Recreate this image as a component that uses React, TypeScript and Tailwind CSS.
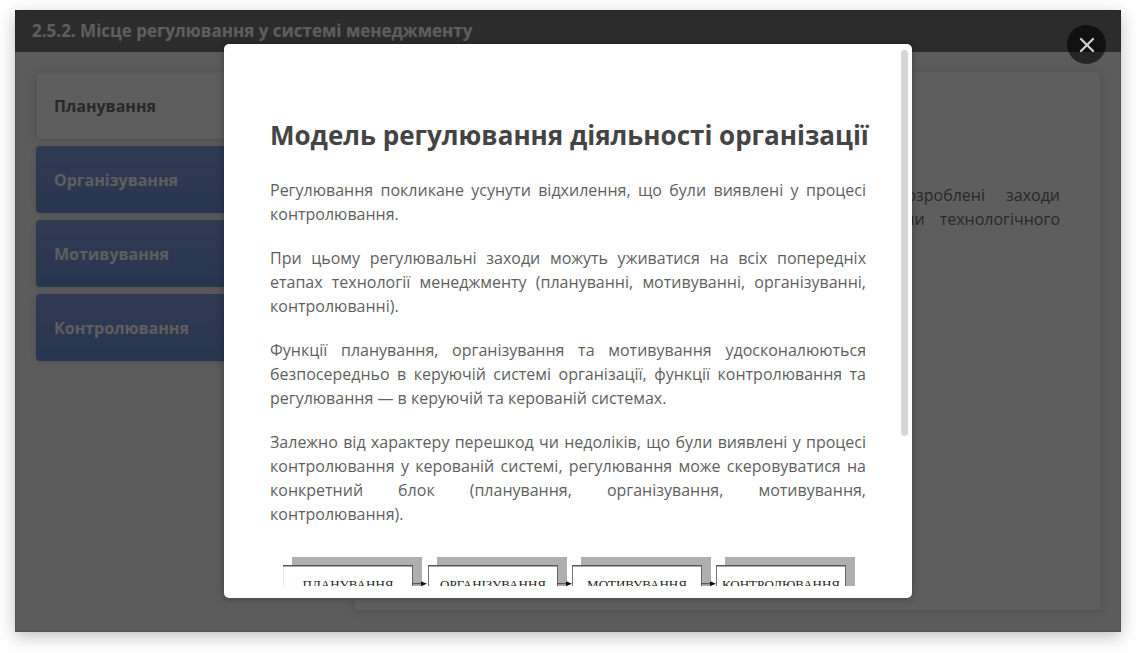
import { X } from "lucide-react";

const tabs = ["Планування", "Організування", "Мотивування", "Контролювання"];

const paragraphs = [
  "Регулювання покликане усунути відхилення, що були виявлені у процесі контролювання.",
  "При цьому регулювальні заходи можуть уживатися на всіх попередніх етапах технології менеджменту (плануванні, мотивуванні, організуванні, контролюванні).",
  "Функції планування, організування та мотивування удосконалюються безпосередньо в керуючій системі організації, функції контролювання та регулювання — в керуючій та керованій системах.",
  "Залежно від характеру перешкод чи недоліків, що були виявлені у процесі контролювання у керованій системі, регулювання може скеровуватися на конкретний блок (планування, організування, мотивування, контролювання).",
];

const stages = [
  { x: 13, label: "ПЛАНУВАННЯ" },
  { x: 158, label: "ОРГАНІЗУВАННЯ" },
  { x: 302, label: "МОТИВУВАННЯ" },
  { x: 446, label: "КОНТРОЛЮВАННЯ" },
];

function Diagram() {
  return (
    <svg viewBox="0 0 596 60" className="block w-full" role="img" aria-label="Модель регулювання">
      {stages.map((s) => (
        <g key={s.label}>
          <rect x={s.x + 9} y="0" width="130" height="40" fill="#afafaf" />
          <rect x={s.x} y="8" width="130" height="40" fill="#fff" />
          <path
            d={`M${s.x + 0.5} 48V8.5`}
            stroke={s.x === 13 ? "#e8e8e8" : "#777"}
            strokeWidth="1"
            fill="none"
          />
          <path d={`M${s.x} 8.7H${s.x + 130}`} stroke="#555" strokeWidth="1.5" />
          <path d={`M${s.x + 129.5} 8V48H${s.x}`} stroke="#666" strokeWidth="1" fill="none" />
          <text
            x={s.x + 65}
            y="32"
            textAnchor="middle"
            fontSize="13"
            fill="#222"
            className="font-['Liberation_Serif',serif]"
          >
            {s.label}
          </text>
        </g>
      ))}
      {stages.slice(0, 3).map((s) => (
        <g key={s.label}>
          <path d={`M${s.x + 129} 26.7H${s.x + 140}`} stroke="#444" strokeWidth="1" />
          <path d={`M${s.x + 138} 24.2L${s.x + 144} 26.7L${s.x + 138} 29.2Z`} fill="#111" />
        </g>
      ))}
    </svg>
  );
}

export default function App() {
  return (
    <div className="flex h-screen flex-col bg-white px-[15px] pt-[10px] pb-[21px] font-['Open_Sans','Noto_Sans',sans-serif]">
      <div className="relative flex min-h-0 flex-1 flex-col bg-[#f8f8f8] shadow-[0_5px_16px_rgba(0,0,0,0.25)]">
        <header className="flex h-[42px] shrink-0 items-center bg-[#787878] px-[17px]">
          <h1 className="text-[17px] font-bold text-white">2.5.2. Місце регулювання у системі менеджменту</h1>
        </header>

        <div className="flex min-h-0 flex-1 gap-5 px-[21px] pt-5 pb-[22px]">
          <nav className="flex w-[299px] shrink-0 flex-col gap-[7px]">
            {tabs.map((tab, i) => (
              <button
                key={tab}
                type="button"
                className={
                  i === 0
                    ? "h-[67px] rounded-[4px] border border-[#f0f0f0] bg-white px-[17px] text-left text-base font-bold text-[#6c6c6c] shadow-[0_1px_8px_rgba(0,0,0,0.15)]"
                    : "h-[67px] rounded-[4px] bg-linear-to-b from-[#82a0dd] to-[#6c92d8] px-[18px] text-left text-base font-bold text-white shadow-[0_1px_6px_rgba(0,0,0,0.15)]"
                }
              >
                {tab}
              </button>
            ))}
          </nav>

          <main className="min-w-0 flex-1 rounded-[4px] bg-white px-10 pt-[111px] text-base leading-6 text-[#707070] shadow-[0_1px_8px_rgba(0,0,0,0.15)]">
            <p className="flex justify-end gap-[21px]">
              <span>розроблені</span>
              <span>заходи</span>
            </p>
            <p className="flex justify-end gap-[15px]">
              <span>ни</span>
              <span>технологічного</span>
            </p>
          </main>
        </div>

        <div className="absolute inset-0 flex justify-center border border-black/10 bg-black/63 py-[33px]">
          <section
            role="dialog"
            aria-modal="true"
            aria-labelledby="dialog-title"
            className="relative flex w-full max-w-[688px] flex-col rounded-[5px] bg-white pb-3 shadow-[0_0_8px_rgba(0,0,0,0.3)]"
          >
            <div className="min-h-0 flex-1 overflow-y-auto px-[46px] pt-[73px] text-[#444] [scrollbar-width:none]">
              <h2 id="dialog-title" className="mb-[25px] text-[26px] leading-9 font-bold whitespace-nowrap">
                Модель регулювання діяльності організації
              </h2>
              <div className="flex flex-col gap-5 text-justify text-base leading-6 text-[#5f5f5f]">
                {paragraphs.map((p) => (
                  <p key={p}>{p}</p>
                ))}
              </div>
              <div className="pt-[31px] pb-10">
                <Diagram />
              </div>
            </div>
            <div className="absolute top-[6px] right-1 h-[386px] w-[7px] rounded-full bg-[#d6d6d6]" />
          </section>

          <button
            type="button"
            aria-label="Закрити"
            className="absolute top-[14px] right-[14px] flex size-[39px] items-center justify-center rounded-full bg-black/60 text-[#d0d0d0]"
          >
            <X className="size-6" strokeWidth={2.25} />
          </button>
        </div>
      </div>
    </div>
  );
}
